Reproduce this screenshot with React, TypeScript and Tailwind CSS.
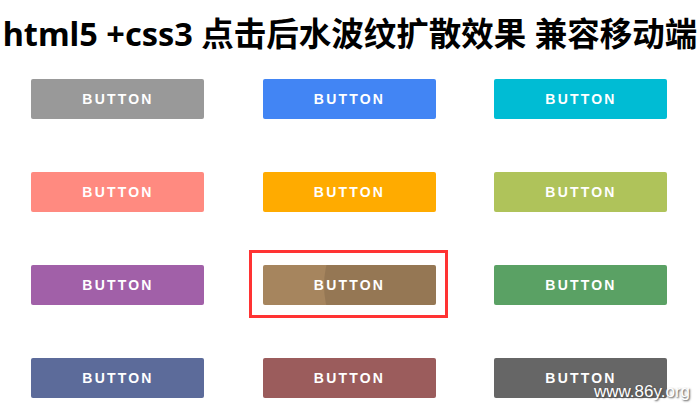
import React from "react";

const buttons = [
  "bg-[#999999]",
  "bg-[#4285f4]",
  "bg-[#00bcd4]",
  "bg-[#ff8a80]",
  "bg-[#ffab00]",
  "bg-[#afc35a]",
  "bg-[#a160a8]",
  "bg-[#a6855e]",
  "bg-[#5aa164]",
  "bg-[#5c6b9a]",
  "bg-[#9b5c5c]",
  "bg-[#666666]",
];

function RippleButton({ color, active }: { color: string; active?: boolean }) {
  return (
    <div className="relative">
      <button
        className={`relative overflow-hidden w-[173px] h-[40px] rounded-[2px] ${color} text-white text-[14px] font-bold tracking-[2.2px] pl-[1px]`}
        style={{ fontFamily: "Arial, 'Liberation Sans', sans-serif" }}
      >
        {/* Ripple in progress */}
        {active && (
          <span className="absolute left-[61px] top-[-66px] w-[173px] h-[173px] rounded-full bg-black/10"></span>
        )}
        <span className="relative">BUTTON</span>
      </button>
      {active && (
        <div className="absolute left-[-14px] top-[-15px] w-[199px] h-[68px] border-[3px] border-[#ff3333] pointer-events-none"></div>
      )}
    </div>
  );
}

export default function App() {
  return (
    <div className="relative w-[700px] h-[420px] bg-white overflow-hidden">
      {/* Title */}
      <h1
        className="pt-[14px] h-[54px] leading-[40px] text-center text-[32.5px] font-bold text-black whitespace-nowrap"
        style={{ fontFamily: "'Noto Sans', 'Noto Sans CJK SC', sans-serif" }}
      >
        html5 +css3 点击后水波纹扩散效果 兼容移动端
      </h1>

      {/* Button grid */}
      <div className="mt-[25px] pl-[31px] grid grid-cols-[173px_173px_173px] gap-x-[58.5px] gap-y-[53px]">
        {buttons.map((c, i) => (
          <RippleButton key={i} color={c} active={i === 7} />
        ))}
      </div>

      {/* Watermark */}
      <div
        className="absolute right-[10px] bottom-[16px] text-white text-[17px] [text-shadow:1px_1px_2px_#444]"
        style={{ fontFamily: "Arial, 'Liberation Sans', sans-serif" }}
      >
        www.86y.org
      </div>
    </div>
  );
}
